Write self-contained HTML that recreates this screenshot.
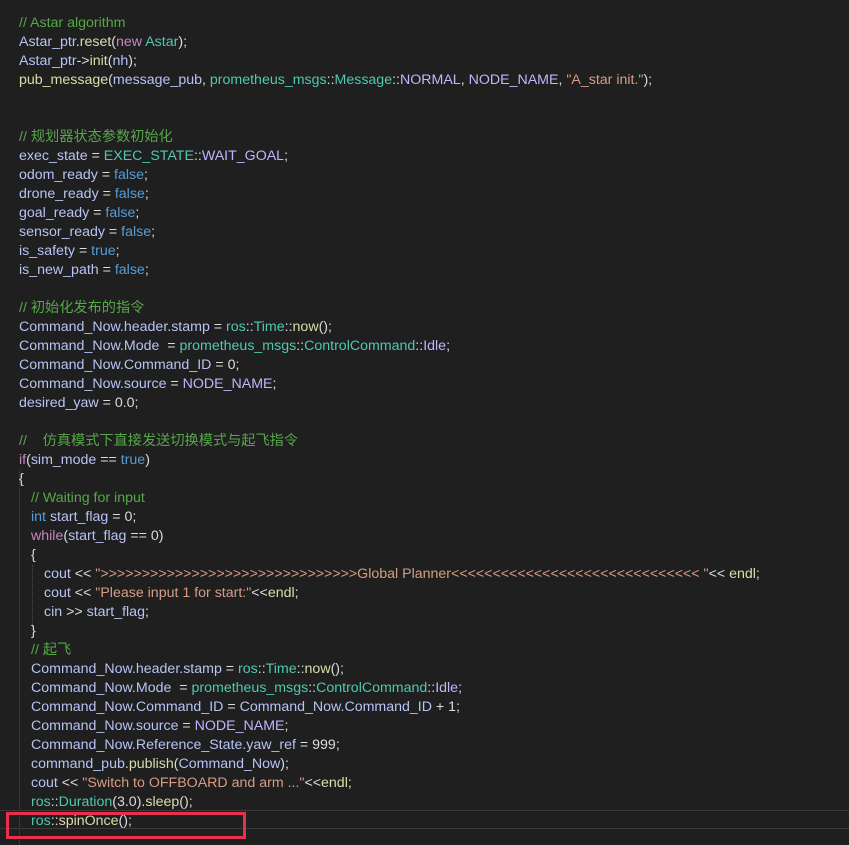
<!DOCTYPE html>
<html><head><meta charset="utf-8"><style>
html,body{margin:0;padding:0;background:#1f1f1f;width:849px;height:845px;overflow:hidden}
#c{position:absolute;left:0;top:14px;font-family:"Liberation Sans","Noto Sans CJK SC",sans-serif;font-size:14.2px;color:#dcdcdc}
.l{height:19px;line-height:19px;padding-left:19px;white-space:pre}
.i1{padding-left:31px}.i2{padding-left:44px}
.c{color:#57a64a}.v{color:#b7c3f5}.f{color:#dcdcaa}.t{color:#4ec9b0}.k{color:#c586c0}.b{color:#569cd6}.s{color:#d69d85}.m{color:#beb7ff}
.g{position:absolute;border-left:1px dotted #4a4a4a}
</style></head><body>
<div class="g" style="left:19px;top:470px;height:375px"></div>
<div class="g" style="left:32px;top:565px;height:62px"></div>
<div style="position:absolute;left:0;top:810px;width:849px;height:0;border-top:1px solid #3a3a3a"></div>
<div style="position:absolute;left:0;top:828px;width:849px;height:0;border-top:1px solid #3a3a3a"></div>
<div id="c"><div class="l c">// Astar algorithm</div><div class="l"><span class="v">Astar_ptr</span>.<span class="f">reset</span>(<span class="k">new</span> <span class="t">Astar</span>);</div><div class="l"><span class="v">Astar_ptr</span>-&gt;<span class="f">init</span>(<span class="v">nh</span>);</div><div class="l"><span class="f">pub_message</span>(<span class="v">message_pub</span>, <span class="t">prometheus_msgs</span>::<span class="t">Message</span>::<span class="m">NORMAL</span>, <span class="m">NODE_NAME</span>, <span class="s">"A_star init."</span>);</div><div class="l"></div><div class="l"></div><div class="l c">// 规划器状态参数初始化</div><div class="l"><span class="v">exec_state</span> = <span class="t">EXEC_STATE</span>::<span class="m">WAIT_GOAL</span>;</div><div class="l"><span class="v">odom_ready</span> = <span class="b">false</span>;</div><div class="l"><span class="v">drone_ready</span> = <span class="b">false</span>;</div><div class="l"><span class="v">goal_ready</span> = <span class="b">false</span>;</div><div class="l"><span class="v">sensor_ready</span> = <span class="b">false</span>;</div><div class="l"><span class="v">is_safety</span> = <span class="b">true</span>;</div><div class="l"><span class="v">is_new_path</span> = <span class="b">false</span>;</div><div class="l"></div><div class="l c">// 初始化发布的指令</div><div class="l"><span class="v">Command_Now.header.stamp</span> = <span class="t">ros</span>::<span class="t">Time</span>::<span class="f">now</span>();</div><div class="l"><span class="v">Command_Now.Mode</span>  = <span class="t">prometheus_msgs</span>::<span class="t">ControlCommand</span>::<span class="m">Idle</span>;</div><div class="l"><span class="v">Command_Now.Command_ID</span> = 0;</div><div class="l"><span class="v">Command_Now.source</span> = <span class="m">NODE_NAME</span>;</div><div class="l"><span class="v">desired_yaw</span> = 0.0;</div><div class="l"></div><div class="l c">//    仿真模式下直接发送切换模式与起飞指令</div><div class="l"><span class="k">if</span>(<span class="v">sim_mode</span> == <span class="b">true</span>)</div><div class="l">{</div><div class="l i1 c">// Waiting for input</div><div class="l i1"><span class="b">int</span> <span class="v">start_flag</span> = 0;</div><div class="l i1"><span class="k">while</span>(<span class="v">start_flag</span> == 0)</div><div class="l i1">{</div><div class="l i2"><span class="v">cout</span> &lt;&lt; <span class="s">"&gt;&gt;&gt;&gt;&gt;&gt;&gt;&gt;&gt;&gt;&gt;&gt;&gt;&gt;&gt;&gt;&gt;&gt;&gt;&gt;&gt;&gt;&gt;&gt;&gt;&gt;&gt;&gt;&gt;&gt;&gt;Global Planner&lt;&lt;&lt;&lt;&lt;&lt;&lt;&lt;&lt;&lt;&lt;&lt;&lt;&lt;&lt;&lt;&lt;&lt;&lt;&lt;&lt;&lt;&lt;&lt;&lt;&lt;&lt;&lt;&lt;&lt; "</span>&lt;&lt; <span class="f">endl</span>;</div><div class="l i2"><span class="v">cout</span> &lt;&lt; <span class="s">"Please input 1 for start:"</span>&lt;&lt;<span class="f">endl</span>;</div><div class="l i2"><span class="v">cin</span> &gt;&gt; <span class="v">start_flag</span>;</div><div class="l i1">}</div><div class="l i1 c">// 起飞</div><div class="l i1"><span class="v">Command_Now.header.stamp</span> = <span class="t">ros</span>::<span class="t">Time</span>::<span class="f">now</span>();</div><div class="l i1"><span class="v">Command_Now.Mode</span>  = <span class="t">prometheus_msgs</span>::<span class="t">ControlCommand</span>::<span class="m">Idle</span>;</div><div class="l i1"><span class="v">Command_Now.Command_ID</span> = <span class="v">Command_Now.Command_ID</span> + 1;</div><div class="l i1"><span class="v">Command_Now.source</span> = <span class="m">NODE_NAME</span>;</div><div class="l i1"><span class="v">Command_Now.Reference_State.yaw_ref</span> = 999;</div><div class="l i1"><span class="v">command_pub</span>.<span class="f">publish</span>(<span class="v">Command_Now</span>);</div><div class="l i1"><span class="v">cout</span> &lt;&lt; <span class="s">"Switch to OFFBOARD and arm ..."</span>&lt;&lt;<span class="f">endl</span>;</div><div class="l i1"><span class="t">ros</span>::<span class="t">Duration</span>(3.0).<span class="f">sleep</span>();</div><div class="l i1"><span class="t">ros</span>::<span class="f">spinOnce</span>();</div></div>
<div style="position:absolute;left:6px;top:812px;width:234px;height:21px;border:3px solid #e8304e"></div>
</body></html>
